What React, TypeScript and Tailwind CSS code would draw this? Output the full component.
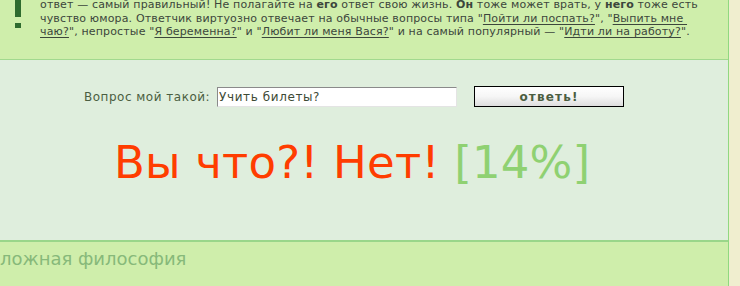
import React from 'react'

const LINK = 'underline underline-offset-2'

export default function App() {
  return (
    <div className="flex h-[286px] w-[740px] overflow-hidden bg-[#f0eecf] font-['DejaVu_Sans',Verdana,sans-serif]">
      <main className="w-[729px] shrink-0 border-r border-[#90d880]">
        {/* ── HEADER NOTE ── */}
        <header className="relative h-[60px] overflow-hidden border-b border-[#a2d98e] bg-[#cfeeab]">
          <div className="absolute left-[15px] top-0 flex flex-col items-center">
            <span className="block h-[17px] w-[6px] bg-[#2e6b2e]" />
            <span className="mt-[6px] block h-[5px] w-[6px] bg-[#2e6b2e]" />
          </div>
          <p className="-mt-[2px] whitespace-nowrap pl-[40px] text-[11px] leading-[13.5px] tracking-[0.15px] text-[#3c463c]">
            ответ — самый правильный! Не полагайте на <b>его</b> ответ свою жизнь. <b>Он</b> тоже может врать, у <b>него</b> тоже есть
            <br />
            чувство юмора. Ответчик виртуозно отвечает на обычные вопросы типа "<a className={LINK}>Пойти ли поспать?</a>", "<a className={LINK}>Выпить мне&nbsp;</a>
            <br />
            <a className={LINK}>чаю?</a>", непростые "<a className={LINK}>Я беременна?</a>" и "<a className={LINK}>Любит ли меня Вася?</a>" и на самый популярный — "<a className={LINK}>Идти ли на работу?</a>".
          </p>
        </header>

        {/* ── ORACLE FORM ── */}
        <section className="h-[182px] border-b-2 border-[#9ad68a] bg-[#dfeedd] pt-[26px]">
          <form className="flex items-center pl-[84px]" onSubmit={(e) => e.preventDefault()}>
            <label className="text-[12px] tracking-[0.5px] text-[#4b5e41]">Вопрос мой такой:</label>
            <input
              defaultValue="Учить билеты?"
              className="ml-[7px] h-[20px] w-[240px] border border-t-[#8a8a8a] border-l-[#8a8a8a] border-b-[#e4e4e4] border-r-[#e4e4e4] bg-white px-[1px] text-[12px] tracking-[0.6px] text-[#3d4a35] outline-none"
            />
            <button
              type="submit"
              className="ml-[17px] h-[21px] w-[150px] border border-black bg-gradient-to-b from-white via-[#f6f6f6] to-[#dedede] text-[12px] font-bold tracking-[1.2px] text-[#4b5e41]"
            >
              ответь!
            </button>
          </form>
          <p className="mt-[28px] pl-[114px] text-[45px] leading-[56px] tracking-[0.2px]">
            <span className="text-[#ff3d00]">Вы что?! Нет!</span>{' '}
            <span className="text-[#8fd172]">[14%]</span>
          </p>
        </section>

        {/* ── FOOTER TAG ── */}
        <footer className="h-[44px] overflow-hidden bg-[#cfeeab]">
          <p className="-ml-[10px] pt-[5px] text-[18px] leading-[24px] text-[#87b97a]">сложная философия</p>
        </footer>
      </main>
      <div className="flex-1" />
    </div>
  )
}
